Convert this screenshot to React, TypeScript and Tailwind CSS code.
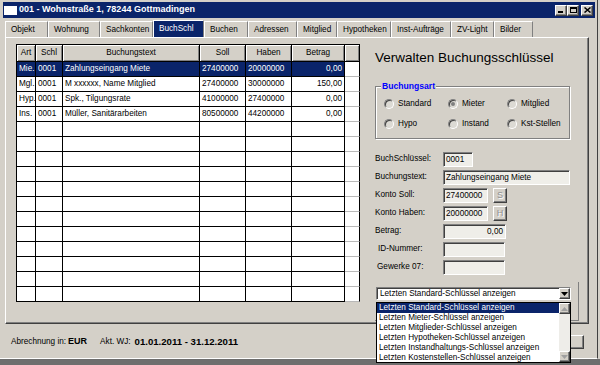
import React from "react";

const raised =
  "bg-[#d4d0c8] border border-t-white border-l-white border-r-[#404040] border-b-[#404040] shadow-[inset_-1px_-1px_0_#808080]";
const sunken =
  "border border-t-[#808080] border-l-[#808080] border-r-white border-b-white shadow-[inset_1px_1px_0_#404040]";

const tabs = [
  { label: "Objekt", w: "w-[43px]" },
  { label: "Wohnung", w: "w-[52px]" },
  { label: "Sachkonten", w: "w-[53px]" },
  { label: "BuchSchl", w: "w-[51px]", active: true },
  { label: "Buchen", w: "w-[44px]" },
  { label: "Adressen", w: "w-[49px]" },
  { label: "Mitglied", w: "w-[40px]" },
  { label: "Hypotheken", w: "w-[54px]" },
  { label: "Inst-Aufträge", w: "w-[60px]" },
  { label: "ZV-Light", w: "w-[43px]" },
  { label: "Bilder", w: "w-[39px]" },
];

const colW = ["w-[19px]", "w-[27px]", "w-[137px]", "w-[46px]", "w-[46px]", "w-[53px]"];
const headers = ["Art", "Schl", "Buchungstext", "Soll", "Haben", "Betrag"];

const rows = [
  ["Mie.", "0001", "Zahlungseingang Miete", "27400000", "20000000", "0,00"],
  ["Mgl.", "0001", "M xxxxxx, Name Mitglied", "27400000", "30000000", "150,00"],
  ["Hyp.", "0001", "Spk., Tilgungsrate", "41000000", "27400000", "0,00"],
  ["Ins.", "0001", "Müller, Sanitärarbeiten", "80500000", "44200000", "0,00"],
  ...Array.from({ length: 12 }, () => ["", "", "", "", "", ""]),
];

const radios = [
  { label: "Standard" },
  { label: "Mieter", checked: true },
  { label: "Mitglied" },
  { label: "Hypo" },
  { label: "Instand" },
  { label: "Kst-Stellen" },
];

const options = [
  "Letzten Standard-Schlüssel anzeigen",
  "Letzten Mieter-Schlüssel anzeigen",
  "Letzten Mitglieder-Schlüssel anzeigen",
  "Letzten Hypotheken-Schlüssel anzeigen",
  "Letzten Instandhaltungs-Schlüssel anzeigen",
  "Letzten Kostenstellen-Schlüssel anzeigen",
];

function Arrow({ up, color }: { up?: boolean; color: string }) {
  return (
    <svg width="7" height="4" viewBox="0 0 7 4">
      <path d={up ? "M0 4 L3.5 0 L7 4 Z" : "M0 0 L7 0 L3.5 4 Z"} fill={color} />
    </svg>
  );
}

function Field({ label, children, indent }: { label: string; children: React.ReactNode; indent?: string }) {
  return (
    <div className="flex items-center h-[15px]">
      <span className={`w-[68px] ${indent ?? ""}`}>{label}</span>
      {children}
    </div>
  );
}

export default function App() {
  return (
    <div className="w-[600px] h-[365px] bg-[#d4d0c8] overflow-hidden font-['Liberation_Sans',Arial,sans-serif] text-[8.2px] text-black">
      <div className="w-[598px] h-[359px] pl-[3px] pr-[2px] pt-[2px] border-r border-r-[#404040] border-b border-b-white">
        {/* title bar */}
        <div className="h-[16px] bg-[#0a246a] flex items-center pl-[1px] pr-[2px]">
          <div className="w-[13px] h-[9px] bg-white" />
          <span className="ml-[2px] text-white font-bold text-[9px]">001 - Wohnstraße 1, 78244 Gottmadingen</span>
          <div className="ml-auto flex items-center">
            <div className={`${raised} w-[12px] h-[11px] flex items-end pl-[2px] pb-[2px]`}>
              <div className="w-[5px] h-[2px] bg-black" />
            </div>
            <div className={`${raised} w-[12px] h-[11px] flex items-center justify-center`}>
              <div className="w-[7px] h-[6px] border border-black border-t-2" />
            </div>
            <div className={`${raised} w-[12px] h-[11px] ml-[2px] flex items-center justify-center`}>
              <svg width="7" height="6" viewBox="0 0 7 6">
                <path d="M0.5 0.5 L6.5 5.5 M6.5 0.5 L0.5 5.5" stroke="#000" strokeWidth="1.5" />
              </svg>
            </div>
          </div>
        </div>

        {/* tabs */}
        <div className="mt-[3px] h-[16px] pl-[2px] flex items-end">
          {tabs.map((t) => (
            <div
              key={t.label}
              className={`${t.w} h-[16px] pl-[5px] leading-[15px] border-t border-l border-r border-t-white border-l-white border-r-[#808080] whitespace-nowrap ${
                t.active ? "bg-[#0a246a] text-white h-[17px] leading-[14px]" : ""
              }`}
            >
              {t.label}
            </div>
          ))}
        </div>

        {/* tab page */}
        <div className="w-[584px] ml-[2px] h-[287px] border border-t-white border-l-white border-r-[#404040] border-b-[#404040] shadow-[inset_-1px_-1px_0_#808080] pt-[6px] pl-[10px] flex gap-[15px]">
          {/* grid */}
          <div className="w-[344px] self-start border-l border-t border-black bg-white">
            <div className="flex h-[17px]">
              {headers.map((h, i) => (
                <div
                  key={h}
                  className={`${colW[i]} h-full bg-[#d4d0c8] border-r border-b border-black shadow-[inset_1px_1px_0_#fff,inset_-1px_-1px_0_#808080] text-center leading-[16px]`}
                >
                  {h}
                </div>
              ))}
              <div className="w-[15px] h-full bg-[#d4d0c8] border-r border-b border-black shadow-[inset_1px_1px_0_#fff,inset_-1px_-1px_0_#808080]" />
            </div>
            {rows.map((r, ri) => (
              <div key={ri} className="flex h-[15px]">
                {r.map((c, ci) => (
                  <div
                    key={ci}
                    className={`${colW[ci]} h-full border-r border-b border-black px-[2px] leading-[14px] whitespace-nowrap overflow-hidden ${
                      ci === 5 ? "text-right" : ""
                    } ${ri === 0 ? "bg-[#0a246a] text-white" : ""}`}
                  >
                    {c}
                  </div>
                ))}
                <div className="w-[15px] h-full border-r border-r-black border-b border-b-[#b8b8b8]" />
              </div>
            ))}
          </div>

          {/* right panel */}
          <div className="w-[204px] flex flex-col">
            <div className="mt-[6px] h-[16px] leading-[16px] text-[13.5px]">Verwalten Buchungsschlüssel</div>

            <fieldset className="mt-[15px] w-[195px] border border-[#808080] shadow-[inset_1px_1px_0_#fff,1px_1px_0_#fff] pb-[8px]">
              <legend className="ml-[5px] px-[1px] bg-[#d4d0c8] text-[#0000ff] font-bold text-[8.6px] leading-[10px]">
                Buchungsart
              </legend>
              <div className="mt-[7px] pl-[8px] grid grid-cols-[64px_59px_60px] gap-y-[8px]">
                {radios.map((r) => (
                  <div key={r.label} className="flex items-center h-[12px]">
                    <div className="w-[10px] h-[10px] rounded-full border border-t-[#808080] border-l-[#808080] border-r-white border-b-white bg-[#dcdad4] shadow-[inset_1px_1px_0_#404040] flex items-center justify-center">
                      {r.checked && <div className="w-[4px] h-[4px] rounded-full bg-[#808080]" />}
                    </div>
                    <span className="ml-[4px]">{r.label}</span>
                  </div>
                ))}
              </div>
            </fieldset>

            <div className="mt-[13px] flex flex-col gap-[3px]">
              <Field label="BuchSchlüssel:">
                <div className={`${sunken} w-[30px] h-[15px] bg-[#efeee9] pl-[2px] leading-[13px]`}>0001</div>
              </Field>
              <Field label="Buchungstext:">
                <div className={`${sunken} w-[127px] h-[15px] bg-[#efeee9] pl-[2px] leading-[13px]`}>Zahlungseingang Miete</div>
              </Field>
              <Field label="Konto Soll:">
                <div className={`${sunken} w-[45px] h-[15px] bg-[#efeee9] pl-[2px] leading-[13px]`}>27400000</div>
                <div className={`${raised} ml-[5px] w-[14px] h-[15px] text-center leading-[13px] text-[9px] text-[#909090] [text-shadow:1px_1px_0_#fff]`}>S</div>
              </Field>
              <Field label="Konto Haben:">
                <div className={`${sunken} w-[45px] h-[15px] bg-[#efeee9] pl-[2px] leading-[13px]`}>20000000</div>
                <div className={`${raised} ml-[5px] w-[14px] h-[15px] text-center leading-[13px] text-[9px] text-[#909090] [text-shadow:1px_1px_0_#fff]`}>H</div>
              </Field>
              <Field label="Betrag:">
                <div className={`${sunken} w-[63px] h-[15px] bg-[#efeee9] pr-[2px] text-right leading-[13px]`}>0,00</div>
              </Field>
              <Field label="ID-Nummer:" indent="pl-[3px]">
                <div className={`${sunken} w-[62px] h-[15px] bg-[#efeee9]`} />
              </Field>
              <Field label="Gewerke 07:" indent="pl-[2px]">
                <div className={`${sunken} w-[62px] h-[15px] bg-[#efeee9]`} />
              </Field>
            </div>

            <div className="mt-[7px] h-[39px] pt-[5px] border-r border-b border-[#808080]">
              <div className="relative ml-[1px] w-[195px]">
                <div className={`${sunken} h-[13px] bg-white flex items-center pl-[3px]`}>
                  <span className="flex-1 leading-[11px]">Letzten Standard-Schlüssel anzeigen</span>
                  <div className={`${raised} w-[11px] h-[11px] flex items-center justify-center`}>
                    <Arrow color="#000" />
                  </div>
                </div>
                {/* open dropdown list */}
                <div className="absolute left-0 top-full mt-[2px] w-[195px] h-[61px] bg-white border border-black flex z-10">
                  <div className="flex-1">
                    {options.map((o, i) => (
                      <div
                        key={o}
                        className={`h-[10px] leading-[10px] pl-[2px] whitespace-nowrap ${
                          i === 0 ? "bg-[#0a246a] text-white" : ""
                        }`}
                      >
                        {o}
                      </div>
                    ))}
                  </div>
                  <div className="w-[11px] flex flex-col bg-[#eeede9]">
                    <div className={`${raised} h-[11px] flex items-center justify-center`}>
                      <Arrow up color="#a0a0a0" />
                    </div>
                    <div className="flex-1" />
                    <div className={`${raised} h-[11px] flex items-center justify-center`}>
                      <Arrow color="#a0a0a0" />
                    </div>
                  </div>
                </div>
              </div>
            </div>
          </div>
        </div>

        {/* status bar */}
        <div className="h-[34px] flex items-center pl-[8px] pr-[11px] pt-[2px]">
          <span>Abrechnung in:</span>
          <span className="ml-[2px] font-bold text-[9px]">EUR</span>
          <span className="ml-[13px]">Akt. WJ:</span>
          <span className="ml-[4px] font-bold text-[9.6px]">01.01.2011 - 31.12.2011</span>
          <div className={`${raised} ml-auto w-[24px] h-[14px]`} />
        </div>
      </div>
      <div className="h-[6px] bg-[#6e6e6e]" />
    </div>
  );
}
